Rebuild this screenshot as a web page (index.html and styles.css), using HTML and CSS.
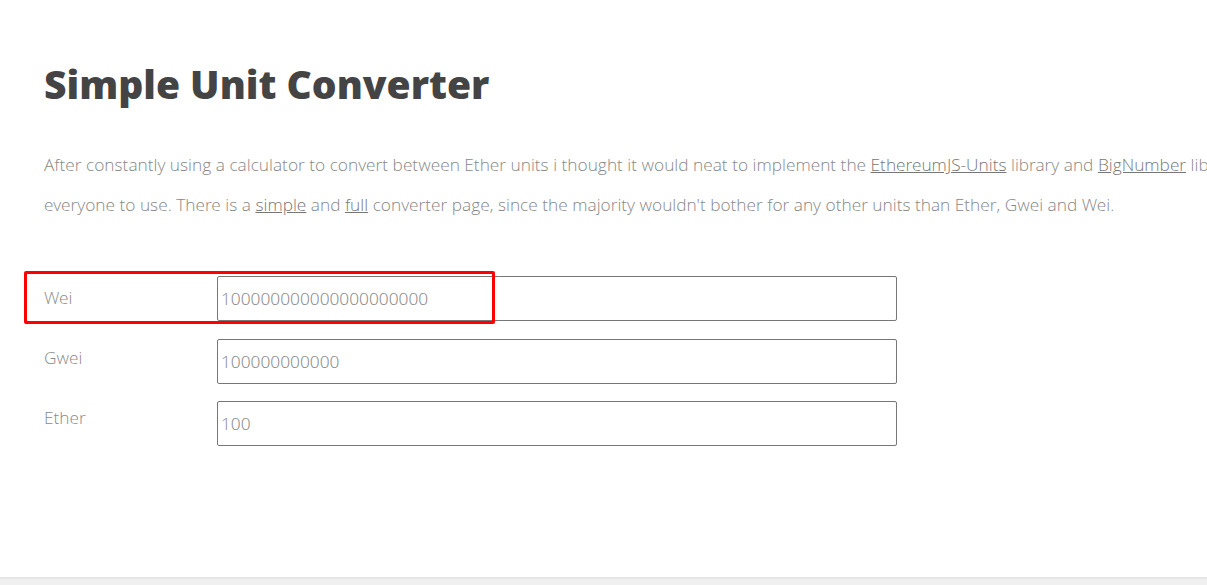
FILE: index.html
```html
<!DOCTYPE html>
<html>
<head>
<meta charset="utf-8">
<link rel="stylesheet" href="styles.css">
</head>
<body>
<div class="page">
  <main class="content">
    <h1 class="title">Simple Unit Converter</h1>
    <p class="intro">After constantly using a calculator to convert between Ether units i thought it would neat to implement the <a href="#">EthereumJS-Units</a> library and <a href="#">BigNumber</a> library for everyone to use. There is a <a href="#">simple</a> and <a href="#">full</a> converter page, since the majority wouldn't bother for any other units than Ether, Gwei and Wei.</p>
    <form class="converter">
      <div class="labels">
        <label class="label">Wei</label>
        <label class="label">Gwei</label>
        <label class="label">Ether</label>
      </div>
      <div class="fields">
        <div class="field-wrap">
          <input class="field" type="text" value="100000000000000000000">
          <span class="annotation"></span>
        </div>
        <input class="field" type="text" value="100000000000">
        <input class="field" type="text" value="100">
      </div>
    </form>
  </main>
  <footer class="footer"></footer>
</div>
</body>
</html>
```
FILE: styles.css
```css
html, body {
  margin: 0;
  padding: 0;
  overflow: hidden;
  background: #fff;
}
body {
  font-family: "Open Sans", "Liberation Sans", sans-serif;
  width: 1207px;
  height: 585px;
}
.page {
  display: flex;
  flex-direction: column;
  height: 585px;
}
.content {
  flex: 1;
  padding: 0 0 0 44px;
  width: 1400px;
}
.title {
  margin: 56px 0 0 0;
  font-size: 39px;
  font-weight: 800;
  color: #444;
  line-height: 56px;
}
.intro {
  margin: 33px 0 0 0;
  font-family: "Open Sans Light", "Open Sans", "Liberation Sans", sans-serif;
  font-size: 17.3px;
  font-weight: 300;
  color: #888;
  line-height: 40px;
  width: 1260px;
}
.intro a {
  color: #777;
  text-decoration: underline;
}
.converter {
  margin-top: 51px;
  display: flex;
  align-items: flex-start;
}
.labels {
  width: 173px;
  display: flex;
  flex-direction: column;
  margin-top: -8px;
}
.label {
  font-family: "Open Sans Light", "Open Sans", "Liberation Sans", sans-serif;
  font-size: 17.3px;
  font-weight: 300;
  color: #8a8a8a;
  line-height: 60px;
}
.fields {
  display: flex;
  flex-direction: column;
  gap: 17.5px;
}
.field-wrap {
  position: relative;
  display: flex;
}
.field {
  box-sizing: border-box;
  width: 680px;
  height: 45px;
  border: 1px solid #777;
  border-radius: 2px;
  padding: 0 3px;
  margin: 0;
  font-family: "Open Sans Light", "Open Sans", "Liberation Sans", sans-serif;
  font-size: 17.3px;
  font-weight: 300;
  color: #8a8a8a;
  background: #fff;
  outline: none;
}
.annotation {
  position: absolute;
  left: -193px;
  top: -5px;
  width: 465px;
  height: 47px;
  border: 3px solid #ff0000;
  border-radius: 2px;
  pointer-events: none;
}
.footer {
  height: 6px;
  background: #f0f0f0;
  border-top: 2px solid #e6e6e6;
}
```
